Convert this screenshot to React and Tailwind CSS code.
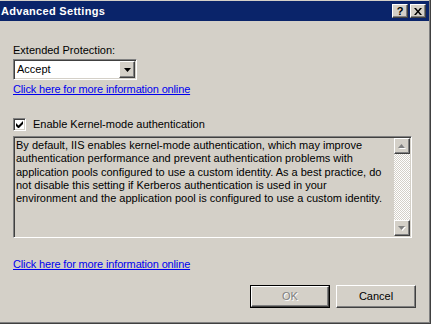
import React from 'react';

const raised =
    'border border-t-white border-l-white border-r-[#404040] border-b-[#404040] shadow-[inset_-1px_-1px_#808080,inset_1px_1px_#d4d0c8]';
const sunken =
    'border border-t-[#808080] border-l-[#808080] border-r-white border-b-white shadow-[inset_1px_1px_#404040,inset_-1px_-1px_#d4d0c8]';

const description = [
    'By default, IIS enables kernel-mode authentication, which may improve',
    'authentication performance and prevent authentication problems with',
    'application pools configured to use a custom identity. As a best practice, do',
    'not disable this setting if Kerberos authentication is used in your',
    'environment and the application pool is configured to use a custom identity.',
];

const Arrow = ({ up, color = '#000' }) => (
    <svg width="7" height="4" viewBox="0 0 7 4" className="block">
        {up ? <polygon points="3.5,0 7,4 0,4" fill={color} /> : <polygon points="0,0 7,0 3.5,4" fill={color} />}
    </svg>
);

const DisabledArrow = ({ up }) => (
    <div className="relative w-[8px] h-[5px]">
        <div className="absolute left-[1px] top-[1px]">
            <Arrow up={up} color="#ffffff" />
        </div>
        <div className="absolute left-0 top-0">
            <Arrow up={up} color="#808080" />
        </div>
    </div>
);

const InfoLink = () => (
    <a href="#" className="text-[#0000ee] underline underline-offset-[1px] leading-[13px] tracking-[-0.15px] self-start">
        Click here for more information online
    </a>
);

const AdvancedSettings = () => {
    return (
        <div className="w-[437px] h-[327px] bg-white overflow-hidden font-['Liberation_Sans',Arial,sans-serif] text-[11px] text-black">
            <div className="w-[431px] h-[324px] border-r border-b border-[#404040] flex">
                <div className="flex-1 flex flex-col bg-[#d4d0c8] border-r border-b border-[#808080] pt-px">
                    {/* title bar */}
                    <div className="h-[20px] bg-[#0a246a] flex items-center justify-between pl-px pr-[3px]">
                        <span className="text-white font-bold text-[11px] leading-[13px] tracking-[0.3px]">Advanced Settings</span>
                        <div className="flex gap-[2px]">
                            <button className={`w-[16px] h-[14px] bg-[#d4d0c8] flex items-center justify-center font-bold text-[11px] leading-none ${raised}`}>
                                ?
                            </button>
                            <button className={`w-[16px] h-[14px] bg-[#d4d0c8] flex items-center justify-center ${raised}`}>
                                <svg width="8" height="7" viewBox="0 0 8 7">
                                    <path d="M0 0h2l2 2.5L6 0h2L5 3.5 8 7H6L4 4.5 2 7H0l3-3.5z" fill="#000" />
                                </svg>
                            </button>
                        </div>
                    </div>

                    {/* body */}
                    <div className="flex-1 flex flex-col px-[13px]">
                        <label className="mt-[23px] leading-[13px]">Extended Protection:</label>
                        <div className={`mt-[2px] w-[124px] h-[21px] bg-white flex items-center ${sunken}`}>
                            <span className="flex-1 pl-[3px] leading-[13px]">Accept</span>
                            <div className={`w-[16px] h-[17px] mr-px bg-[#d4d0c8] flex items-center justify-center ${raised}`}>
                                <Arrow />
                            </div>
                        </div>
                        <div className="mt-[3px] flex">
                            <InfoLink />
                        </div>

                        <div className="mt-[22px] flex items-center gap-[7px]">
                            <div className={`w-[13px] h-[13px] bg-white flex items-center justify-center ${sunken}`}>
                                <svg width="7" height="7" viewBox="0 0 7 7">
                                    <path d="M0 2v3l2 2h1l4-4V0L2.5 4.5z" fill="#000" />
                                </svg>
                            </div>
                            <span className="leading-[13px]">Enable Kernel-mode authentication</span>
                        </div>

                        <div className={`mt-[5px] w-[399px] h-[102px] bg-[#d4d0c8] flex ${sunken}`}>
                            <div className="flex-1 pl-[2px] pt-[2px]">
                                {description.map((line) => (
                                    <div key={line} className="leading-[13.3px] whitespace-nowrap">
                                        {line}
                                    </div>
                                ))}
                            </div>
                            <div className="w-[16px] mt-px mb-px mr-px flex flex-col">
                                <div className={`h-[16px] bg-[#d4d0c8] flex items-center justify-center ${raised}`}>
                                    <DisabledArrow up />
                                </div>
                                <div className="flex-1 bg-[repeating-conic-gradient(#ffffff_0_25%,#d4d0c8_0_50%)] bg-[length:2px_2px]"></div>
                                <div className={`h-[16px] bg-[#d4d0c8] flex items-center justify-center ${raised}`}>
                                    <DisabledArrow />
                                </div>
                            </div>
                        </div>

                        <div className="mt-[20px] flex">
                            <InfoLink />
                        </div>

                        <div className="mt-[14px] flex justify-end gap-[6px]">
                            <div className="w-[80px] h-[23px] border border-black">
                                <button disabled className={`w-full h-full bg-[#d4d0c8] ${raised} text-[#808080] [text-shadow:1px_1px_#ffffff] leading-[13px]`}>
                                    OK
                                </button>
                            </div>
                            <button className={`w-[80px] h-[23px] bg-[#d4d0c8] ${raised} leading-[13px]`}>Cancel</button>
                        </div>
                    </div>
                </div>
            </div>
        </div>
    );
};

export default AdvancedSettings;
